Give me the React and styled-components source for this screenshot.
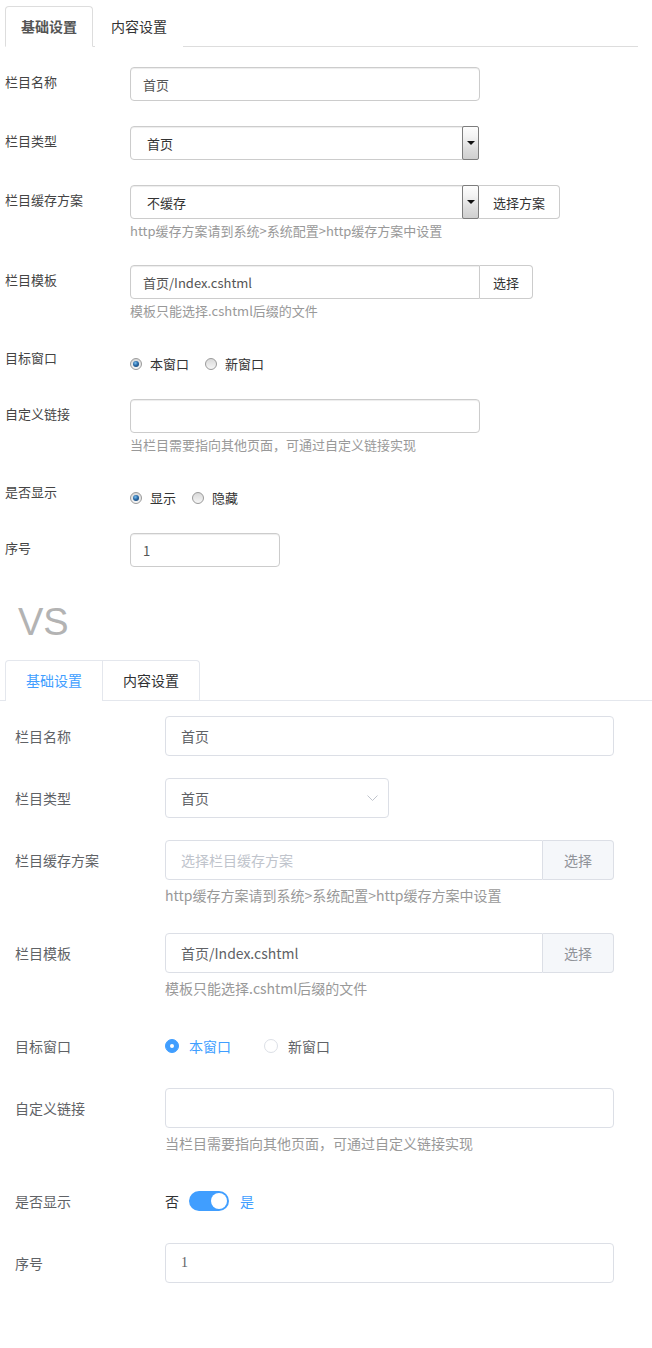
import React from 'react';
import styled, { createGlobalStyle } from 'styled-components';

const GlobalStyle = createGlobalStyle`
  html, body { margin: 0; padding: 0; background: #fff; }
  body { font-family: "Noto Sans CJK SC", "Noto Sans", sans-serif; width: 652px; }
  *, *::before, *::after { box-sizing: border-box; }
  input { font: inherit; margin: 0; outline: none; }
`;

const Page = styled.div`
  width: 652px;
  min-height: 1348px;
`;

/* ---------- old (bootstrap-like) ---------- */
const OldSection = styled.section`
  padding: 6px 14px 0 5px;
`;

const OldTabBar = styled.div`
  display: flex;
  height: 41px;
  border-bottom: 1px solid #ddd;
`;

const OldTab = styled.div`
  height: 41px;
  margin-bottom: -1px;
  margin-right: 2px;
  padding: 0 15px;
  line-height: 39px;
  font-size: 14px;
  font-weight: ${p => (p.$active ? 700 : 400)};
  color: ${p => (p.$active ? '#555' : '#333')};
  background: #fff;
  border: 1px solid ${p => (p.$active ? '#ddd' : 'transparent')};
  border-bottom-color: ${p => (p.$active ? '#fff' : 'transparent')};
  border-radius: 4px 4px 0 0;
`;

const OldForm = styled.div`
  padding-top: 20px;
`;

const OldRow = styled.div`
  display: flex;
  margin-bottom: 25px;
`;

const OldLabel = styled.div`
  width: 125px;
  flex-shrink: 0;
  padding-top: ${p => (p.$tight ? 3 : 5)}px;
  line-height: 20px;
  font-size: 13px;
  color: #444;
`;

const OldControl = styled.div`
  display: flex;
  flex-direction: column;
`;

const OldGroup = styled.div`
  display: flex;
`;

const OldInput = styled.input`
  width: ${p => p.$w}px;
  height: 34px;
  padding: 6px 12px;
  font-size: 13px;
  color: #555;
  border: 1px solid #ccc;
  border-radius: ${p => (p.$joined ? '4px 0 0 4px' : '4px')};
  box-shadow: inset 0 1px 1px rgba(0, 0, 0, 0.075);
  background: #fff;
`;

const OldSelect = styled.div`
  width: ${p => p.$w}px;
  height: 34px;
  display: flex;
  align-items: center;
  padding-left: 16px;
  font-size: 13px;
  color: #333;
  border: 1px solid #ccc;
  border-radius: ${p => (p.$joined ? '4px 0 0 4px' : '4px')};
  box-shadow: inset 0 1px 1px rgba(0, 0, 0, 0.075);
  background: #fff;
`;

const OldSelectText = styled.span`
  flex: 1;
`;

const OldSelectArrow = styled.span`
  align-self: stretch;
  width: 17px;
  margin: -1px -1px -1px 0;
  display: flex;
  align-items: center;
  justify-content: center;
  border: 1px solid #7d7d7d;
  border-radius: 2px;
  background: linear-gradient(#fdfdfd 0%, #f3f3f3 30%, #dcdcdc 70%, #cfcfcf 100%);
  &::after {
    content: '';
    width: 0;
    height: 0;
    border-left: 4px solid transparent;
    border-right: 4px solid transparent;
    border-top: 4px solid #111;
    margin-top: -1px;
  }
`;

const OldAddon = styled.div`
  height: 34px;
  display: flex;
  align-items: center;
  padding: 0 ${p => p.$pad || 13}px;
  font-size: 13px;
  color: #333;
  background: #fff;
  border: 1px solid #ccc;
  border-left: none;
  border-radius: 0 4px 4px 0;
`;

const OldHelp = styled.div`
  margin-top: 2px;
  line-height: 19px;
  font-size: 13px;
  color: #999;
`;

const OldRadioGroup = styled.div`
  display: flex;
  align-items: center;
  height: 29px;
  padding-top: 9px;
`;

const OldRadioItem = styled.label`
  display: flex;
  align-items: center;
  margin-right: 16px;
  font-size: 13px;
  line-height: 20px;
  color: #333;
`;

const OldRadioDot = styled.span`
  position: relative;
  width: 12px;
  height: 12px;
  margin-right: 8px;
  border-radius: 50%;
  border: 1px solid #9a9a9a;
  background: linear-gradient(#d9d9d9, #f6f6f6);
  &::after {
    content: '';
    display: ${p => (p.$checked ? 'block' : 'none')};
    position: absolute;
    left: 2px;
    top: 2px;
    width: 6px;
    height: 6px;
    border-radius: 50%;
    background: radial-gradient(circle at 40% 35%, #7cc0f0 0%, #2a6aa6 45%, #153a66 100%);
  }
`;

/* ---------- VS ---------- */
const Versus = styled.div`
  margin: 36px 0 19px 18px;
  font-family: "Liberation Sans", Arial, sans-serif;
  font-size: 38px;
  line-height: 38px;
  color: #b3b3b3;
`;

/* ---------- new (element-like) ---------- */
const NewSection = styled.section``;

const NewTabHeader = styled.div`
  height: 41px;
  padding-left: 5px;
  border-bottom: 1px solid #e4e7ed;
`;

const NewTabNav = styled.div`
  display: inline-flex;
  border: 1px solid #e4e7ed;
  border-bottom: none;
  border-radius: 4px 4px 0 0;
  background: #fff;
`;

const NewTab = styled.div`
  height: 40px;
  padding: 0 20px;
  line-height: 39px;
  font-size: 14px;
  color: ${p => (p.$active ? '#409eff' : '#303133')};
  border-left: ${p => (p.$first ? 'none' : '1px solid #e4e7ed')};
  border-bottom: 1px solid ${p => (p.$active ? '#fff' : '#e4e7ed')};
`;

const NewForm = styled.div`
  padding: 15px 38px 0 15px;
`;

const NewRow = styled.div`
  display: flex;
  margin-bottom: 22px;
`;

const NewLabel = styled.div`
  width: 150px;
  flex-shrink: 0;
  line-height: 40px;
  font-size: 14px;
  color: #606266;
`;

const NewControl = styled.div`
  flex: 1;
  display: flex;
  flex-direction: column;
`;

const NewGroup = styled.div`
  display: flex;
`;

const NewInput = styled.input`
  width: ${p => (p.$w ? `${p.$w}px` : '100%')};
  flex: ${p => (p.$grow ? 1 : 'none')};
  min-width: 0;
  height: 40px;
  padding: 0 15px;
  font-size: 14px;
  font-family: ${p => (p.$serif ? '"Liberation Serif", serif' : 'inherit')};
  color: #606266;
  border: 1px solid #dcdfe6;
  border-radius: ${p => (p.$joined ? '4px 0 0 4px' : '4px')};
  background: #fff;
  &::placeholder { color: #c0c4cc; }
`;

const NewSelect = styled.div`
  width: 224px;
  height: 40px;
  display: flex;
  align-items: center;
  padding: 0 10px 0 15px;
  font-size: 14px;
  color: #606266;
  border: 1px solid #dcdfe6;
  border-radius: 4px;
`;

const NewSelectText = styled.span`
  flex: 1;
`;

const NewAppend = styled.div`
  height: 40px;
  display: flex;
  align-items: center;
  padding: 0 21px;
  font-size: 14px;
  color: #909399;
  background: #f5f7fa;
  border: 1px solid #dcdfe6;
  border-left: none;
  border-radius: 0 4px 4px 0;
`;

const NewHelp = styled.div`
  line-height: 31px;
  font-size: 14px;
  color: #999;
`;

const NewRadioGroup = styled.div`
  display: flex;
  align-items: center;
  height: 40px;
`;

const NewRadioItem = styled.label`
  display: flex;
  align-items: center;
  margin-right: 33px;
  font-size: 14px;
  color: ${p => (p.$checked ? '#409eff' : '#606266')};
`;

const NewRadioDot = styled.span`
  position: relative;
  width: 14px;
  height: 14px;
  margin-right: 10px;
  border-radius: 50%;
  border: 1px solid ${p => (p.$checked ? '#409eff' : '#dcdfe6')};
  background: ${p => (p.$checked ? '#409eff' : '#fff')};
  &::after {
    content: '';
    display: ${p => (p.$checked ? 'block' : 'none')};
    position: absolute;
    left: 4px;
    top: 4px;
    width: 4px;
    height: 4px;
    border-radius: 50%;
    background: #fff;
  }
`;

const SwitchRow = styled.div`
  display: flex;
  align-items: center;
  height: 40px;
  font-size: 14px;
`;

const SwitchText = styled.span`
  color: ${p => (p.$active ? '#409eff' : '#303133')};
  margin: ${p => (p.$right ? '0 0 0 11px' : '0 10px 0 0')};
`;

const SwitchTrack = styled.span`
  position: relative;
  width: 40px;
  height: 20px;
  border-radius: 10px;
  background: ${p => (p.$on ? '#409eff' : '#dcdfe6')};
  &::after {
    content: '';
    position: absolute;
    top: 2px;
    left: ${p => (p.$on ? '22px' : '2px')};
    width: 16px;
    height: 16px;
    border-radius: 50%;
    background: #fff;
  }
`;

const Chevron = () => (
  <svg width="11" height="7" viewBox="0 0 11 7" fill="none">
    <polyline points="0.5,0.5 5.5,5.5 10.5,0.5" stroke="#c0c4cc" strokeWidth="1" />
  </svg>
);

export default function App() {
  return (
    <Page>
      <GlobalStyle />
      <OldSection>
        <OldTabBar>
          <OldTab $active>基础设置</OldTab>
          <OldTab>内容设置</OldTab>
        </OldTabBar>
        <OldForm>
          <OldRow>
            <OldLabel>栏目名称</OldLabel>
            <OldControl>
              <OldInput $w={350} defaultValue="首页" readOnly />
            </OldControl>
          </OldRow>
          <OldRow>
            <OldLabel>栏目类型</OldLabel>
            <OldControl>
              <OldSelect $w={349}>
                <OldSelectText>首页</OldSelectText>
                <OldSelectArrow />
              </OldSelect>
            </OldControl>
          </OldRow>
          <OldRow>
            <OldLabel>栏目缓存方案</OldLabel>
            <OldControl>
              <OldGroup>
                <OldSelect $w={349} $joined>
                  <OldSelectText>不缓存</OldSelectText>
                  <OldSelectArrow />
                </OldSelect>
                <OldAddon $pad={14}>选择方案</OldAddon>
              </OldGroup>
              <OldHelp>http缓存方案请到系统&gt;系统配置&gt;http缓存方案中设置</OldHelp>
            </OldControl>
          </OldRow>
          <OldRow>
            <OldLabel>栏目模板</OldLabel>
            <OldControl>
              <OldGroup>
                <OldInput $w={350} $joined defaultValue="首页/Index.cshtml" readOnly />
                <OldAddon $pad={13}>选择</OldAddon>
              </OldGroup>
              <OldHelp>模板只能选择.cshtml后缀的文件</OldHelp>
            </OldControl>
          </OldRow>
          <OldRow>
            <OldLabel $tight>目标窗口</OldLabel>
            <OldRadioGroup>
              <OldRadioItem>
                <OldRadioDot $checked />本窗口
              </OldRadioItem>
              <OldRadioItem>
                <OldRadioDot />新窗口
              </OldRadioItem>
            </OldRadioGroup>
          </OldRow>
          <OldRow>
            <OldLabel>自定义链接</OldLabel>
            <OldControl>
              <OldInput $w={350} defaultValue="" readOnly />
              <OldHelp>当栏目需要指向其他页面，可通过自定义链接实现</OldHelp>
            </OldControl>
          </OldRow>
          <OldRow>
            <OldLabel $tight>是否显示</OldLabel>
            <OldRadioGroup>
              <OldRadioItem>
                <OldRadioDot $checked />显示
              </OldRadioItem>
              <OldRadioItem>
                <OldRadioDot />隐藏
              </OldRadioItem>
            </OldRadioGroup>
          </OldRow>
          <OldRow>
            <OldLabel>序号</OldLabel>
            <OldControl>
              <OldInput $w={150} defaultValue="1" readOnly />
            </OldControl>
          </OldRow>
        </OldForm>
      </OldSection>

      <Versus>VS</Versus>

      <NewSection>
        <NewTabHeader>
          <NewTabNav>
            <NewTab $active $first>基础设置</NewTab>
            <NewTab>内容设置</NewTab>
          </NewTabNav>
        </NewTabHeader>
        <NewForm>
          <NewRow>
            <NewLabel>栏目名称</NewLabel>
            <NewControl>
              <NewInput defaultValue="首页" readOnly />
            </NewControl>
          </NewRow>
          <NewRow>
            <NewLabel>栏目类型</NewLabel>
            <NewControl>
              <NewSelect>
                <NewSelectText>首页</NewSelectText>
                <Chevron />
              </NewSelect>
            </NewControl>
          </NewRow>
          <NewRow>
            <NewLabel>栏目缓存方案</NewLabel>
            <NewControl>
              <NewGroup>
                <NewInput $grow $joined placeholder="选择栏目缓存方案" readOnly />
                <NewAppend>选择</NewAppend>
              </NewGroup>
              <NewHelp>http缓存方案请到系统&gt;系统配置&gt;http缓存方案中设置</NewHelp>
            </NewControl>
          </NewRow>
          <NewRow>
            <NewLabel>栏目模板</NewLabel>
            <NewControl>
              <NewGroup>
                <NewInput $grow $joined defaultValue="首页/Index.cshtml" readOnly />
                <NewAppend>选择</NewAppend>
              </NewGroup>
              <NewHelp>模板只能选择.cshtml后缀的文件</NewHelp>
            </NewControl>
          </NewRow>
          <NewRow>
            <NewLabel>目标窗口</NewLabel>
            <NewRadioGroup>
              <NewRadioItem $checked>
                <NewRadioDot $checked />本窗口
              </NewRadioItem>
              <NewRadioItem>
                <NewRadioDot />新窗口
              </NewRadioItem>
            </NewRadioGroup>
          </NewRow>
          <NewRow>
            <NewLabel>自定义链接</NewLabel>
            <NewControl>
              <NewInput defaultValue="" readOnly />
              <NewHelp>当栏目需要指向其他页面，可通过自定义链接实现</NewHelp>
            </NewControl>
          </NewRow>
          <NewRow>
            <NewLabel>是否显示</NewLabel>
            <SwitchRow>
              <SwitchText>否</SwitchText>
              <SwitchTrack $on />
              <SwitchText $active $right>是</SwitchText>
            </SwitchRow>
          </NewRow>
          <NewRow>
            <NewLabel>序号</NewLabel>
            <NewControl>
              <NewInput $serif defaultValue="1" readOnly />
            </NewControl>
          </NewRow>
        </NewForm>
      </NewSection>
    </Page>
  );
}
